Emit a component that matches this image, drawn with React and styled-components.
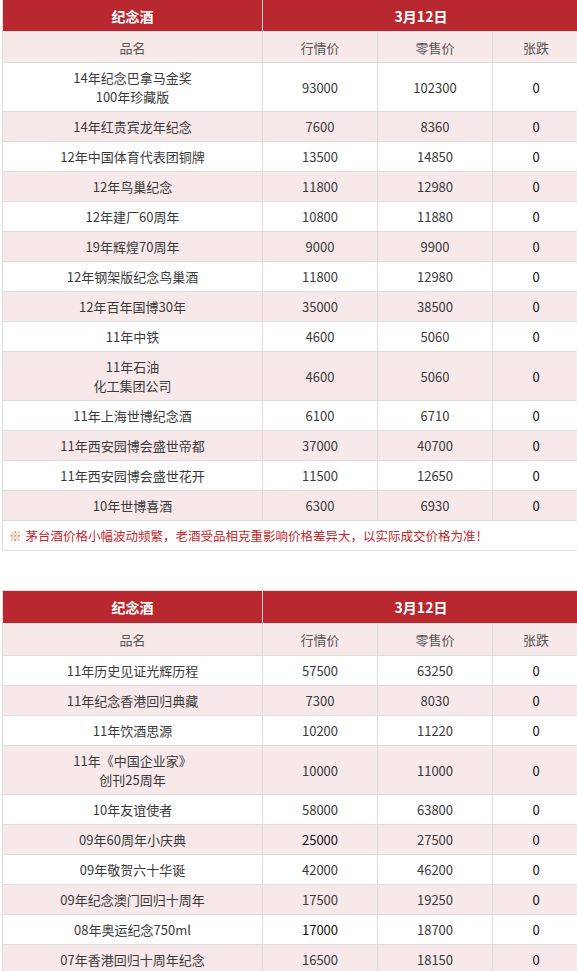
import React from "react";
import styled, { createGlobalStyle } from "styled-components";

const Global = createGlobalStyle`
  html, body { margin: 0; padding: 0; background: #fff; }
  body { font-family: "Noto Sans CJK SC", "Noto Sans", sans-serif; overflow-x: hidden; }
`;

const Page = styled.div`
  width: 577px;
  padding-left: 2px;
  display: flex;
  flex-direction: column;
  gap: 39px;
  box-sizing: border-box;
  overflow: hidden;
`;

const Table = styled.table`
  width: 577px;
  table-layout: fixed;
  border-collapse: collapse;
  font-size: 13px;
  color: #3a3a3a;
  margin-top: ${(p) => (p.$first ? "-1px" : "0")};
`;

const HeadCell = styled.th`
  background: #b8282e;
  color: #fff;
  font-weight: 700;
  font-size: 14px;
  height: ${(p) => (p.$compact ? "31px" : "32px")};
  padding: 0;
  text-align: center;
  border: 1px solid #dddddd;
  border-right-color: ${(p) => (p.$divider ? "#e9c9cb" : "#dddddd")};
`;

const SubCell = styled.td`
  background: #f7e8e9;
  color: #555;
  height: ${(p) => (p.$compact ? "30px" : "31px")};
  padding: 0;
  line-height: 19px;
  text-align: center;
  border: 1px solid #dddddd;
`;

const Row = styled.tr`
  background: ${(p) => (p.$pink ? "#f7e8e9" : "#ffffff")};
`;

const Cell = styled.td`
  padding: 5px 4px;
  line-height: 19px;
  text-align: center;
  border: 1px solid #dddddd;
  color: ${(p) => (p.$dark ? "#111" : "#3a3a3a")};
`;

const NoteCell = styled.td`
  padding: 5px 6px;
  line-height: 19px;
  text-align: left;
  font-size: 12.5px;
  color: #c0272d;
  border: 1px solid #dddddd;
  background: #fff;
`;

const Mark = styled.span`
  color: #e07b39;
  margin-right: 4px;
`;

const table1 = [
  [["14年纪念巴拿马金奖", "100年珍藏版"], "93000", "102300"],
  [["14年红贵宾龙年纪念"], "7600", "8360"],
  [["12年中国体育代表团铜牌"], "13500", "14850"],
  [["12年鸟巢纪念"], "11800", "12980"],
  [["12年建厂60周年"], "10800", "11880"],
  [["19年辉煌70周年"], "9000", "9900"],
  [["12年钢架版纪念鸟巢酒"], "11800", "12980"],
  [["12年百年国博30年"], "35000", "38500"],
  [["11年中铁"], "4600", "5060"],
  [["11年石油", "化工集团公司"], "4600", "5060"],
  [["11年上海世博纪念酒"], "6100", "6710"],
  [["11年西安园博会盛世帝都"], "37000", "40700"],
  [["11年西安园博会盛世花开"], "11500", "12650"],
  [["10年世博喜酒"], "6300", "6930"],
];

const table2 = [
  [["11年历史见证光辉历程"], "57500", "63250"],
  [["11年纪念香港回归典藏"], "7300", "8030"],
  [["11年饮酒思源"], "10200", "11220"],
  [["11年《中国企业家》", "创刊25周年"], "10000", "11000"],
  [["10年友谊使者"], "58000", "63800"],
  [["09年60周年小庆典"], "25000", "27500", true],
  [["09年敬贺六十华诞"], "42000", "46200"],
  [["09年纪念澳门回归十周年"], "17500", "19250"],
  [["08年奥运纪念750ml"], "17000", "18700", true],
  [["07年香港回归十周年纪念"], "16500", "18150"],
];

function PriceTable({ rows, note, first }) {
  return (
    <Table $first={first}>
      <colgroup>
        <col style={{ width: 260 }} />
        <col style={{ width: 115 }} />
        <col style={{ width: 115 }} />
        <col style={{ width: 87 }} />
      </colgroup>
      <thead>
        <tr>
          <HeadCell $divider $compact={first}>纪念酒</HeadCell>
          <HeadCell colSpan={3} $compact={first}>3月12日</HeadCell>
        </tr>
      </thead>
      <tbody>
        <tr>
          <SubCell $compact={first}>品名</SubCell>
          <SubCell $compact={first}>行情价</SubCell>
          <SubCell $compact={first}>零售价</SubCell>
          <SubCell $compact={first}>张跌</SubCell>
        </tr>
        {rows.map(([name, market, retail, dark], i) => (
          <Row key={i} $pink={i % 2 === 1}>
            <Cell>
              {name.map((l, j) => (
                <React.Fragment key={j}>
                  {j > 0 && <br />}
                  {l}
                </React.Fragment>
              ))}
            </Cell>
            <Cell $dark={dark}>{market}</Cell>
            <Cell>{retail}</Cell>
            <Cell $dark>0</Cell>
          </Row>
        ))}
        {note && (
          <tr>
            <NoteCell colSpan={4}>
              <Mark>※</Mark>茅台酒价格小幅波动频繁，老酒受品相克重影响价格差异大，以实际成交价格为准！
            </NoteCell>
          </tr>
        )}
      </tbody>
    </Table>
  );
}

export default function App() {
  return (
    <>
      <Global />
      <Page>
        <PriceTable rows={table1} note first />
        <PriceTable rows={table2} />
      </Page>
    </>
  );
}
